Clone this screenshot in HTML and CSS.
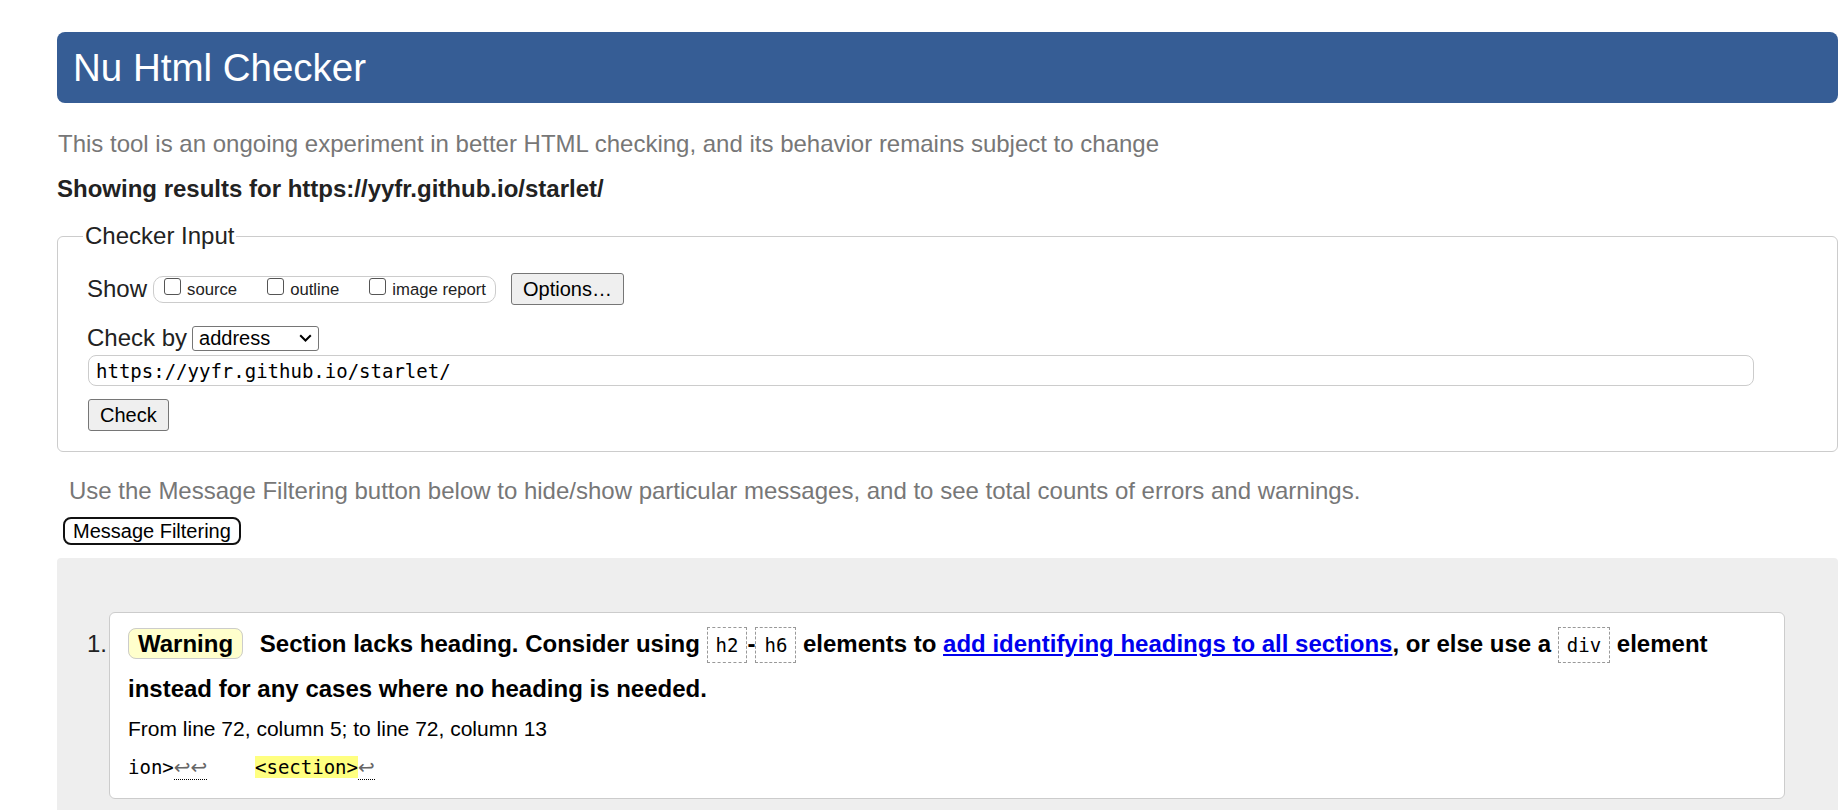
FILE: index.html
```html
<!DOCTYPE html>
<html lang="en">
<head>
<meta charset="utf-8">
<title>Showing results for https://yyfr.github.io/starlet/ - Nu Html Checker</title>
<link rel="stylesheet" href="styles.css">
</head>
<body>
<h1 class="title">Nu Html Checker</h1>
<p class="intro">This tool is an ongoing experiment in better HTML checking, and its behavior remains subject to change</p>
<p class="showing">Showing results for https://yyfr.github.io/starlet/</p>
<form class="checker">
  <fieldset class="input-set">
    <legend class="input-legend">Checker Input</legend>
    <div class="row row-show">
      <span class="row-label">Show</span>
      <span class="show-group">
        <label class="opt"><input type="checkbox" class="cb"><span class="opt-text">source</span></label>
        <label class="opt"><input type="checkbox" class="cb"><span class="opt-text">outline</span></label>
        <label class="opt"><input type="checkbox" class="cb"><span class="opt-text">image report</span></label>
      </span>
      <button type="button" class="btn btn-options">Options…</button>
    </div>
    <div class="row row-by">
      <span class="row-label">Check by</span>
      <span class="select-wrap">
        <select class="select"><option>address</option></select>
        <svg class="chevron" width="13" height="8" viewBox="0 0 13 8"><path d="M1.2 1.2 L6.5 6.5 L11.8 1.2" fill="none" stroke="#000" stroke-width="2"/></svg>
      </span>
    </div>
    <input class="url" type="text" value="https://yyfr.github.io/starlet/">
    <button type="button" class="btn btn-check">Check</button>
  </fieldset>
</form>
<p class="filter-note">Use the Message Filtering button below to hide/show particular messages, and to see total counts of errors and warnings.</p>
<button type="button" class="filter-btn">Message Filtering</button>
<div class="results">
  <ol class="messages">
    <li class="msg">
      <p class="msg-text"><strong class="badge">Warning</strong> Section lacks heading. Consider using <code class="kw">h2</code>-<code class="kw">h6</code> elements to <a class="link" href="#">add identifying headings to all sections</a>, or else use a <code class="kw">div</code> element instead for any cases where no heading is needed.</p>
      <p class="location">From line 72, column 5; to line 72, column 13</p>
      <p class="extract"><code class="src">ion&gt;<span class="lf lf-pair">↩↩</span>    <mark class="hl">&lt;section&gt;</mark><span class="lf">↩</span></code></p>
    </li>
  </ol>
</div>
</body>
</html>
```
FILE: styles.css
```css
html {
  background: #fff;
}

body {
  margin: 0;
  padding: 32px 7px 0 57px;
  font-family: "Liberation Sans", Arial, sans-serif;
  font-size: 24px;
  color: #222;
}

.title {
  margin: 0;
  height: 71px;
  padding: 0 16px;
  background: #365d95;
  color: #fff;
  font-size: 38.5px;
  font-weight: normal;
  line-height: 71px;
  border-radius: 8px;
}

.intro {
  margin: 27px 0 0;
  padding-left: 1px;
  line-height: 28px;
  color: #777;
}

.showing {
  margin: 17px 0 0;
  line-height: 28px;
  font-weight: bold;
  color: #222;
}

.checker {
  margin: 0;
}

.input-set {
  margin: 19px 0 0;
  padding: 23px 0 20px 29px;
  border: 1px solid #ccc;
  border-radius: 6px;
  min-width: 0;
}

.input-legend {
  margin-left: -4px;
  padding: 0 2px;
  font-size: 24px;
  line-height: 28px;
  color: #222;
}

.row {
  display: flex;
  align-items: center;
}

.row-show {
  height: 32px;
}

.row-label {
  line-height: 28px;
  color: #222;
}

.show-group {
  display: flex;
  align-items: center;
  gap: 30px;
  box-sizing: border-box;
  height: 27px;
  margin-left: 6px;
  padding: 0 9px 0 10px;
  border: 1px solid #ccc;
  border-radius: 10px;
}

.opt {
  display: flex;
  align-items: center;
}

.cb {
  appearance: none;
  -webkit-appearance: none;
  width: 17px;
  height: 17px;
  margin: 0 6px 6px 0;
  border: 1px solid #555;
  border-radius: 3px;
  background: #fff;
}

.opt-text {
  font-size: 16.7px;
  line-height: 17px;
  color: #222;
}

.btn {
  box-sizing: border-box;
  height: 32px;
  padding: 0 11px;
  font-family: "Liberation Sans", Arial, sans-serif;
  font-size: 20px;
  color: #000;
  background: #efefef;
  border: 1px solid #767676;
  border-radius: 3px;
}

.btn-options {
  margin-left: 15px;
}

.row-by {
  margin-top: 19px;
  height: 28px;
}

.select-wrap {
  display: flex;
  align-items: center;
  margin-left: 5px;
}

.select {
  appearance: none;
  -webkit-appearance: none;
  box-sizing: border-box;
  width: 127px;
  height: 25px;
  padding: 0 0 0 6px;
  font-family: "Liberation Sans", Arial, sans-serif;
  font-size: 20px;
  color: #000;
  background: #fff;
  border: 1px solid #767676;
  border-radius: 3px;
}

.chevron {
  margin-left: -20px;
}

.url {
  display: block;
  box-sizing: border-box;
  width: 1666px;
  height: 31px;
  margin: 3px 0 0 1px;
  padding: 0 7px;
  font-family: "DejaVu Sans Mono", "Liberation Mono", monospace;
  font-size: 19px;
  color: #000;
  background: #fff;
  border: 1px solid #ccc;
  border-radius: 8px;
}

.btn-check {
  display: block;
  margin-top: 13px;
  margin-left: 1px;
}

.filter-note {
  margin: 25px 0 0;
  padding-left: 12px;
  line-height: 28px;
  color: #777;
}

.filter-btn {
  display: block;
  box-sizing: border-box;
  height: 28px;
  margin: 12px 0 0 6px;
  padding: 0 8px;
  font-family: "Liberation Sans", Arial, sans-serif;
  font-size: 20px;
  line-height: 24px;
  color: #000;
  background: #fff;
  border: 2px solid #111;
  border-radius: 8px;
}

.results {
  margin-top: 13px;
  padding: 54px 53px 40px 52px;
  background: #eee;
  border-radius: 4px 4px 0 0;
}

.messages {
  margin: 0;
  padding: 0;
  list-style: decimal outside;
}

.msg {
  padding: 9px 18px 15px;
  background: #fff;
  border: 1px solid #ccc;
  border-radius: 6px;
  color: #222;
}

.msg::marker {
  content: counter(list-item) ".\200A";
}

.msg-text {
  margin: 0;
  line-height: 44px;
  font-weight: bold;
  color: #000;
}

.badge {
  margin-right: 10px;
  padding: 1px 9px;
  background: #ffffcc;
  border: 1px solid #ccc;
  border-radius: 8px;
}

.kw {
  padding: 6px 8px;
  font-family: "DejaVu Sans Mono", "Liberation Mono", monospace;
  font-size: 19px;
  font-weight: normal;
  color: #000;
  border: 1px dashed #999;
}

.link {
  color: #0000ee;
  text-decoration: underline;
}

.location {
  margin: 3px 0 0;
  font-size: 21px;
  line-height: 30px;
  color: #000;
}

.extract {
  margin: 6px 0 0;
  line-height: 32px;
}

.src {
  font-family: "DejaVu Sans Mono", "Liberation Mono", monospace;
  font-size: 19px;
  color: #000;
  white-space: pre;
}

.lf {
  font-family: "DejaVu Sans", sans-serif;
  font-size: 20px;
  color: #666;
  border-bottom: 1px dotted #000;
}

.lf-pair {
  margin-right: 2px;
}

.hl {
  background: #ffff80;
  color: #000;
}
```
